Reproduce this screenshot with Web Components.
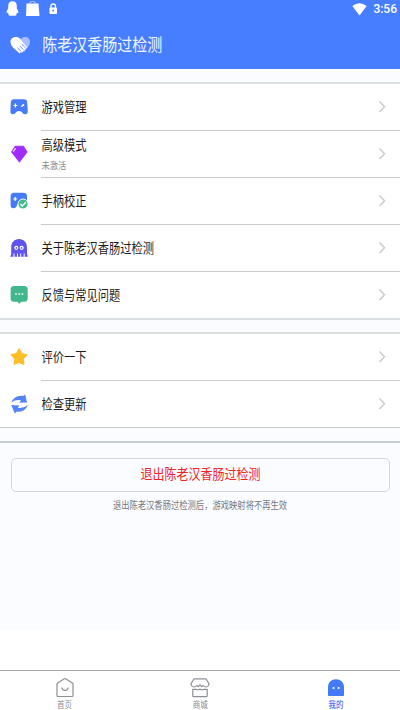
<!DOCTYPE html>
<html lang="zh-CN"><head><meta charset="utf-8"><title>我的</title>
<style>html,body{margin:0;height:100%;background:#fff;overflow:hidden}</style></head><body>
<app-page></app-page>
<script>
const icons={
pad:'<path d="M4 1.200h10Q16.800 1.200 17.200 4.200L17.800 13Q17.800 16.300 15.200 16.300Q13.300 16.300 12.400 14.700L11 13.600Q9 12.600 7 13.600L5.600 14.700Q4.700 16.300 2.800 16.300Q.4 16.300 .4 13L.8 4.200Q1.200 1.200 4 1.200Z" fill="#477bf5"/><path d="M3.500 7.500h3.800M5.400 5.600v3.800" stroke="#fff" stroke-width="1.200"/><circle cx="12" cy="8.100" r=".9" fill="#fff"/><circle cx="13.300" cy="7" r="1" fill="#fff"/>',
gem:'<path d="M5 1.200h8.500L17.200 7 9.400 17.200 1.500 7Z" fill="#a02bf9" stroke="#a02bf9" stroke-width=".8" stroke-linejoin="round"/><path d="M3.300 6.700 5.600 3.100" fill="none" stroke="#efd7ff" stroke-width="1.300"/>',
check:'<path d="M4 .8h9.500Q16.500.8 17 4v8H7.500Q6.300 16.300 3.500 16.300Q.6 16.300 .6 13.300V4Q1 .8 4 .8Z" fill="#477bf5"/><path d="M3.300 7h3.800M5.200 5.100v3.800" stroke="#fff" stroke-width="1.200"/><circle cx="13" cy="12" r="5" fill="#3fba91" stroke="#fff" stroke-width=".9"/><path d="m10.400 12 1.900 2 3.500-3.800" stroke="#fff" stroke-width="1.400" fill="none"/>',
squid:'<path d="M1.200 15V8.500C1.200 3.500 4.300 0 9 0s8 3.500 8 8.500V15l.9 2.700h-3.200v-3.200h-1V17.700h-2.500v-3.200h-1V17.700H8v-3.200H7V17.700H4.500v-3.200h-1V17.700H.3Z" fill="#6153ed"/><circle cx="6.300" cy="8.800" r="2.100" fill="#fff"/><circle cx="11.700" cy="8.800" r="2.100" fill="#fff"/><circle cx="6.400" cy="8.900" r=".9" fill="#6153ed"/><circle cx="11.600" cy="8.900" r=".9" fill="#6153ed"/>',
chat:'<path d="M4 0h10.200q3.500 0 3.500 3.500v8.700q0 3.500-3.500 3.500H11.300L9.300 17.800l-2-2.100H4Q.6 15.700.6 12.200V3.500Q.6 0 4 0Z" fill="#42b78d"/><path d="M5.200 8.100h1.600M8.400 8.100h1.600M11.600 8.100h1.600" stroke="#fff" stroke-width="1.500"/>',
star:'<path d="m9 1.200 2.400 4.600 5.200.9-3.700 4.100.8 5.300L9 14l-4.700 2.100.8-5.300L1.400 6.700l5.200-.9Z" fill="#ffbd27" stroke="#ffbd27" stroke-width="1.600" stroke-linejoin="round"/>',
sync:'<path d="M1.400 7.500Q4.500-.4 13.300.9L15.200-.6 17 7.600 9.300 7.800 11.200 5.500Q6 4.100 1.400 7.500Z" fill="#5583f4"/><path d="M18 10Q14.500 17.700 6.800 16.500L4.800 18.500 1.200 10 9.500 10.600 7.900 12.700Q13.300 13.700 18 10Z" fill="#5583f4"/>',
heart:'<path d="M11 4C14 .5 20 2 20 7q0 3-2.500 5.500L14 17 8 11Z" fill="#a6c1ff"/><path d="M10.500 4C7 .5 .5 2 .5 7Q.5 10 3 12.500L9 18q1.500.5 1.600-.8l1.500.3q1.400-.4 1-1.700 1.700.2 1.700-1.500L17 12.500 11 5Z" fill="#fff"/><path d="m7.500 12.500 3.600 4M9.800 10.800l3.600 4M11.900 9l3.400 3.800" stroke="#477eff" stroke-width=".8"/>',
home:'<path d="M2 18.500Q1 18.500 1 17.500V6.500Q1 5.600 1.700 5.100L8.300.8Q9 .4 9.700.8L16.300 5.100Q17 5.600 17 6.500V17.500q0 1-1 1Z"/><path d="M5.800 9.500q.3 2.900 3.200 2.900t3.200-2.900"/>',
shop:'<path d="M4 .8h12l3 5Q18.700 8.700 16.200 9 14.300 9 13.200 7.500L11.700 8.700 10 7 8.300 8.700 6.800 7.500Q5.700 9 3.800 9 1.300 8.700 1 5.800Z"/><path d="M2.800 17.700V11.300H6L8 12 10 11.100 12 12 14 11.300h3.200V17.700q0 1-1 1H3.800Q2.800 18.700 2.800 17.700Z"/>',
me:'<path d="M1.700 18Q1 18 1 17.300V9.200C1 4.200 4.500 1.200 9 1.200s8 3 8 8v8.100Q17 18 16.300 18Z" fill="#437af8"/><circle cx="6.500" cy="10" r="1.100" fill="#fff"/><circle cx="11.600" cy="10" r="1.100" fill="#fff"/>'};
const def=(name,render)=>customElements.define(name,class extends HTMLElement{
 connectedCallback(){if(!this.shadowRoot)this.attachShadow({mode:'open'}).innerHTML=render(this)}});
const font='"Noto Sans CJK SC",sans-serif';
def('ui-icon',e=>{const n=e.getAttribute('name');const wide=n==='shop'||n==='heart';const tall=n==='home'||n==='shop'||n==='heart';
 return `<style>:host{display:block;flex:none}svg{display:block;overflow:visible}</style><svg width="${wide?20:18}" height="${tall?19:18}" viewBox="0 0 ${wide?20:18} ${tall?19:18}" fill="none" ${n==='home'||n==='shop'?'stroke="#8d9095" stroke-width="1.2" stroke-linejoin="round"':''}>${icons[n]}</svg>`});
def('ui-text',()=>`<style>:host{display:block;white-space:nowrap;line-height:1.35;transform:scaleY(1.17)}</style><slot></slot>`);
def('status-bar',()=>`<style>:host{display:flex;height:18px;padding:0 3px 0 6px;align-items:center;color:#fff;font:12px/18px Roboto,sans-serif}svg{display:block}.sp{flex:1}.t{margin-left:6px;font-weight:500;transform:scaleY(1.08)}</style>
<svg width="54" height="18" fill="#fff"><path d="M2.200 6q0-4.800 4.300-4.800T10.800 6v2.500q1.500 2.200 1.700 4.300l-1.500.3-.6 1q.6 1.500-1.400 1.700H4q-2-.2-1.400-1.700l-.6-1L.5 12.800Q.7 10.500 2.200 8.500Z"/><path d="M20.500 3.500h12L33.500 16H20Z"/><path d="M23 4q0-2.500 3.500-2.500T30 4" fill="none" stroke="#b8ceff"/><rect x="43.500" y="7.500" width="7.500" height="6.500" rx=".8"/><path d="M45 8V6q0-2 2.200-2t2.200 2V8" fill="none" stroke="#fff" stroke-width="1.300"/><circle cx="47.200" cy="10.500" r=".9" fill="#477eff"/></svg>
<span class="sp"></span><svg width="15" height="13" fill="#fff"><path d="M.3 3Q7.500-2.300 14.700 3L7.500 12.500Z"/></svg><span class="t">3:56</span>`);
def('app-header',()=>`<style>:host{display:flex;flex-direction:column;height:69px;background:#477eff;flex:none}div{flex:1;display:flex;align-items:center;padding:0 0 0 10px;gap:12.3px;color:#f1f5ff;font-size:15px;margin-top:1px}</style><status-bar></status-bar><div><ui-icon name="heart"></ui-icon><ui-text><slot></slot></ui-text></div>`);
def('menu-group',()=>`<style>:host{display:block;flex:none;background:#fff;border:solid #d9dee1;border-width:2px 0}:host(.second){border-bottom:1px solid #c6cdd0}</style><slot></slot>`);
def('menu-row',e=>`<style>:host{display:flex;height:47px;padding-left:10px;box-sizing:border-box}ui-icon{margin-top:14px}.b{flex:1;box-sizing:border-box;margin-left:13px;display:flex;align-items:center;justify-content:space-between;padding-right:14px;border-bottom:1px solid #c9cccf;color:#1d1d1d;font-size:11.25px}:host([last]) .b{border-bottom:0}:host([last]){height:46px}.n{color:#8a8a8a;font-size:8.25px;margin-top:6px}.w{padding:0 0 1px .5px}.w.two{padding:1px 0 2px .5px}svg{display:block}</style>
<ui-icon name="${e.getAttribute('icon')}"></ui-icon><div class="b"><div class="w ${e.hasAttribute('note')?'two':''}"><ui-text><slot></slot></ui-text>${e.hasAttribute('note')?`<ui-text class="n">${e.getAttribute('note')}</ui-text>`:''}</div><svg width="8" height="12" fill="none" stroke="#c9cbd2" stroke-width="1.500"><path d="m1.500 .5 5 5.200-5 5.200"/></svg></div>`);
def('exit-button',()=>`<style>:host{display:flex;box-sizing:border-box;height:34px;margin:15px 10px 0 11px;padding-bottom:3px;border:1.5px solid #d4d7da;border-radius:5px;align-items:center;justify-content:center;color:#ef2323;font-size:12px}</style><ui-text><slot></slot></ui-text>`);
def('tab-item',e=>`<style>:host{display:flex;flex-direction:column;align-items:center;width:40px;padding-top:7px;color:#85888e;font-size:7.5px;gap:3px}:host([active]){color:#4377f0;font-weight:500}ui-icon{height:19px}</style><ui-icon name="${e.getAttribute('icon')}"></ui-icon><ui-text><slot></slot></ui-text>`);
def('tab-bar',()=>`<style>:host{display:flex;justify-content:space-between;box-sizing:border-box;height:40px;border-top:1px solid #a5a7a9;padding:0 44px 0 44.5px;background:#fff}</style><slot></slot>`);
def('app-page',()=>`<style>:host{display:flex;flex-direction:column;height:710px;width:400px;font-family:${font}}main{display:flow-root;height:561px;background:#fafcff;flex:none}.top{margin-top:13px}.second{margin-top:12px}.rule{height:2px;background:#c5cdd0;margin-top:13px}.hint{text-align:center;color:#74787d;font-size:8.3px;margin-top:7px}.space{flex:1}</style>
<app-header>陈老汉香肠过检测</app-header><main>
<menu-group class="top"><menu-row icon="pad">游戏管理</menu-row><menu-row icon="gem" note="未激活">高级模式</menu-row><menu-row icon="check">手柄校正</menu-row><menu-row icon="squid">关于陈老汉香肠过检测</menu-row><menu-row icon="chat" last>反馈与常见问题</menu-row></menu-group>
<menu-group class="second"><menu-row icon="star">评价一下</menu-row><menu-row icon="sync" last>检查更新</menu-row></menu-group>
<div class="rule"></div><exit-button>退出陈老汉香肠过检测</exit-button><ui-text class="hint">退出陈老汉香肠过检测后，游戏映射将不再生效</ui-text></main>
<div class="space"></div><tab-bar><tab-item icon="home">首页</tab-item><tab-item icon="shop">商城</tab-item><tab-item icon="me" active>我的</tab-item></tab-bar>`);
</script></body></html>
